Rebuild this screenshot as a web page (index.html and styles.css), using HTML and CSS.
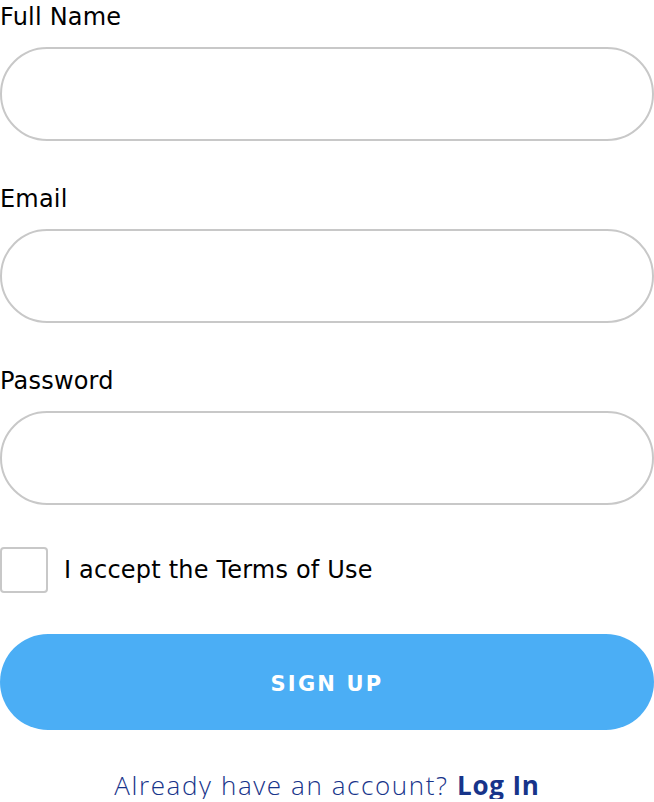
FILE: index.html
```html
<!DOCTYPE html>
<html>
<head>
<meta charset="utf-8">
<link rel="stylesheet" href="styles.css">
</head>
<body>
<form class="signup">
  <div class="field">
    <label class="label">Full Name</label>
    <input class="input" type="text">
  </div>
  <div class="field">
    <label class="label">Email</label>
    <input class="input" type="email">
  </div>
  <div class="field">
    <label class="label">Password</label>
    <input class="input" type="password">
  </div>
  <div class="terms">
    <span class="box"></span>
    <span class="terms-text">I accept the Terms of Use</span>
  </div>
  <button class="btn" type="button">SIGN UP</button>
  <p class="login">Already have an account? <b class="login-link">Log In</b></p>
</form>
</body>
</html>
```
FILE: styles.css
```css
html, body {
  margin: 0;
  padding: 0;
  background: #fff;
}
body {
  font-family: "DejaVu Sans", "Liberation Sans", sans-serif;
  color: #000;
}
.signup {
  display: flex;
  flex-direction: column;
  width: 654px;
}
.field {
  display: flex;
  flex-direction: column;
  margin-bottom: 41px;
}
.label {
  font-size: 24px;
  letter-spacing: 0.2px;
  line-height: 31px;
  height: 31px;
  padding-top: 2px;
  margin-bottom: 14px;
}
.input {
  box-sizing: border-box;
  width: 654px;
  height: 94px;
  border: 2px solid #c8c8c8;
  border-radius: 47px;
  margin: 0;
  padding: 0 30px;
  background: #fff;
  outline: none;
}
.terms {
  display: flex;
  align-items: center;
  gap: 16px;
  margin-top: 1px;
  margin-bottom: 41px;
}
.box {
  box-sizing: border-box;
  width: 48px;
  height: 46px;
  border: 2px solid #c8c8c8;
  border-radius: 4px;
}
.terms-text {
  font-size: 24px;
  letter-spacing: 0.2px;
  line-height: 30px;
}
.btn {
  box-sizing: border-box;
  width: 654px;
  height: 96px;
  border: none;
  border-radius: 48px;
  background: #4baef5;
  color: #fff;
  font-family: "DejaVu Sans", "Liberation Sans", sans-serif;
  font-weight: 700;
  font-size: 21px;
  letter-spacing: 2.2px;
  padding: 3px 0 0;
}
.login {
  margin: 41px 0 0;
  text-align: center;
  font-family: "Open Sans", "Liberation Sans", sans-serif;
  font-size: 26px;
  line-height: 28px;
  font-weight: 300;
  letter-spacing: 1.6px;
  color: #17348a;
}
.login-link {
  font-weight: 700;
  letter-spacing: 0.8px;
}
```
